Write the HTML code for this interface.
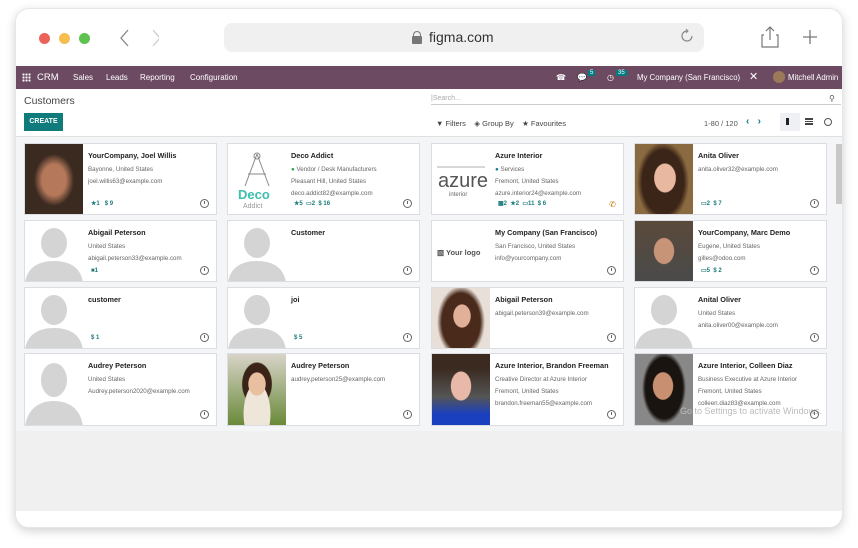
<!DOCTYPE html>
<html><head><meta charset="utf-8"><style>
*{box-sizing:border-box;margin:0;padding:0}
body{width:858px;height:548px;background:#fff;font-family:"Liberation Sans",sans-serif;position:relative;overflow:hidden}
.frame{position:absolute;left:15px;top:8px;width:828px;height:520px;border-radius:14px;background:#fff;box-shadow:0 3px 10px rgba(0,0,0,.18);overflow:hidden;border:1px solid #e6e6e6}
.a{position:absolute}
.nav{left:0;top:57px;width:828px;height:23px;background:#6c4a62;color:#fff;font-size:8px}
.nav span{position:absolute;top:7px;white-space:nowrap}
.card{position:absolute;width:193px;background:#fff;border:1px solid #dcdde2;font-size:6.2px;color:#666;overflow:hidden}
.card .im{position:absolute;left:0;top:0;bottom:0;width:58px}
.card .t{position:absolute;left:63px;top:7px;right:4px}
.card b{display:block;font-size:7.3px;color:#222;font-weight:bold;margin-bottom:6px}
.card p{margin-bottom:5px;white-space:nowrap}
.card .ft{position:absolute;left:66px;bottom:7px;font-size:6px;color:#1a7a7a;font-weight:bold}
.clk{position:absolute;right:7px;bottom:6px;width:9px;height:9px;border:1.2px solid #666;border-radius:50%}
.clk:after{content:"";position:absolute;left:3px;top:1px;width:1px;height:3px;background:#666}
.ph{background:#fff}
</style></head><body>
<div class="frame">
 <div class="a" style="left:23px;top:24px;width:11px;height:11px;border-radius:50%;background:#ec6158"></div>
 <div class="a" style="left:43px;top:24px;width:11px;height:11px;border-radius:50%;background:#f5be4f"></div>
 <div class="a" style="left:63px;top:24px;width:11px;height:11px;border-radius:50%;background:#5dc24f"></div>
 <svg class="a" style="left:103px;top:20px" width="40" height="18"><path d="M9 1L2 9l7 8" stroke="#888" fill="none" stroke-width="1.3"/><path d="M34 1l7 8-7 8" stroke="#ccc" fill="none" stroke-width="1.3"/></svg>
 <div class="a" style="left:208px;top:14px;width:480px;height:29px;border-radius:8px;background:#f0f0f0"></div>
 <div class="a" style="left:397px;top:22px;width:8px;height:7px;border:1.5px solid #777;border-bottom:none;border-radius:4px 4px 0 0"></div>
 <div class="a" style="left:396px;top:27px;width:10px;height:8px;background:#777;border-radius:1px"></div>
 <div class="a" style="left:413px;top:20px;font-size:14px;color:#333">figma.com</div>
 <svg class="a" style="left:664px;top:20px" width="14" height="14"><path d="M7 2a5 5 0 1 0 5 5" stroke="#888" fill="none" stroke-width="1.2"/><path d="M6 0l2 2-2 2" stroke="#888" fill="none"/></svg>
 <svg class="a" style="left:745px;top:17px" width="18" height="22"><path d="M3 9H1v12h16V9h-2M9 1v13M5 5l4-4 4 4" stroke="#777" fill="none" stroke-width="1.2"/></svg>
 <svg class="a" style="left:786px;top:20px" width="16" height="16"><path d="M8 1v14M1 8h14" stroke="#777" stroke-width="1.3"/></svg>

 <div class="a nav">
  <div class="a" style="left:6px;top:7px;width:9px;height:9px;background:radial-gradient(circle,#fff 1px,transparent 1.2px) 0 0/3px 3px"></div>
  <span style="left:21px;font-size:9.5px;top:6px">CRM</span>
  <span style="left:57px">Sales</span><span style="left:90px">Leads</span><span style="left:124px">Reporting</span><span style="left:174px">Configuration</span>
  <span style="left:540px">☎</span>
  <span style="left:561px">💬</span><span style="left:572px;top:4px;background:#017e84;padding:0 2px;font-size:6px">5</span>
  <span style="left:591px">◷</span><span style="left:600px;top:4px;background:#017e84;padding:0 2px;font-size:6px">35</span>
  <span style="left:621px;font-size:7.8px">My Company (San Francisco)</span>
  <span style="left:733px;font-size:11px;top:4px">✕</span>
  <div class="a" style="left:757px;top:5px;width:12px;height:12px;border-radius:50%;background:#9b7a5a"></div>
  <span style="left:772px;font-size:7.8px">Mitchell Admin</span>
 </div>
 <div class="a" style="left:8px;top:86px;font-size:10.5px;color:#444">Customers</div>
 <div class="a" style="left:8px;top:104px;width:39px;height:18px;background:#0f7b7b;color:#fff;font-size:7px;font-weight:bold;text-align:center;line-height:18px">CREATE</div>
 <div class="a" style="left:415px;top:81px;width:410px;height:15px;border-bottom:1px solid #ccc;font-size:7px;color:#aaa;padding-top:5px">|Search...</div>
 <div class="a" style="left:813px;top:85px;font-size:8px;color:#555">⚲</div>
 <div class="a" style="left:420px;top:110px;font-size:7.5px;color:#444;white-space:nowrap">▼ Filters &nbsp;&nbsp; ◈ Group By &nbsp;&nbsp; ★ Favourites</div>
 <div class="a" style="left:688px;top:110px;font-size:7.5px;color:#555">1-80 / 120</div>
 <div class="a" style="left:730px;top:107px;font-size:10px;color:#0f7b7b;font-weight:bold">‹ &nbsp; ›</div>
 <div class="a" style="left:764px;top:104px;width:20px;height:18px;background:#eef0f3"></div>
 <div class="a" style="left:770px;top:109px;width:6px;height:7px;background:#222;border-right:3px solid #eef0f3;box-shadow:3px 0 0 #222 inset"></div>
 <div class="a" style="left:789px;top:109px;width:8px;height:7px;border-top:2px solid #444;border-bottom:2px solid #444;background:linear-gradient(#fff 1px,#444 1px,#444 2px,#fff 2px)"></div>
 <div class="a" style="left:808px;top:109px;width:8px;height:8px;border:1px solid #555;border-radius:50%"></div>

 <div class="a" style="left:0;top:127px;width:828px;height:295px;background:#f4f5f7;border-top:1px solid #e0e0e0"></div>
 <div class="a" style="left:0;top:422px;width:828px;height:80px;background:#f0f0f0"></div>
 <div class="a" style="left:820px;top:135px;width:8px;height:60px;background:#c8c8c8"></div>

 <div class="a" style="left:8px;top:134px;width:820px;height:290px">
 <div class="card" style="left:0;top:0;height:72px"><div class="im" style="background:radial-gradient(ellipse 20px 26px at 29px 36px,#b5785a 60%,#3a2a20 100%),#1b6fa8"></div><div class="t"><b>YourCompany, Joel Willis</b><p>Bayonne, United States</p><p>joel.willis63@example.com</p></div><div class="ft">★1 &nbsp; $ 9</div><div class="clk"></div></div>
 <div class="card" style="left:203px;top:0;height:72px"><div class="im ph"><svg width="58" height="72"><path d="M29 10l-12 32M29 10l12 32M20 30h18" stroke="#888" fill="none"/><circle cx="29" cy="12" r="3" fill="none" stroke="#888"/><text x="10" y="55" font-size="13" font-weight="bold" fill="#3cbfae" font-family="Liberation Sans">Deco</text><text x="15" y="64" font-size="7" fill="#999" font-family="Liberation Sans">Addict</text></svg></div><div class="t"><b>Deco Addict</b><p><span style="color:#28a745">●</span> Vendor / Desk Manufacturers</p><p>Pleasant Hill, United States</p><p>deco.addict82@example.com</p></div><div class="ft">★5 &nbsp;▭2 &nbsp;$ 16</div><div class="clk"></div></div>
 <div class="card" style="left:407px;top:0;height:72px"><div class="im ph"><svg width="58" height="72"><line x1="5" y1="23" x2="53" y2="23" stroke="#666" stroke-width=".6"/><text x="6" y="43" font-size="20" fill="#555" font-family="Liberation Sans">azure</text><text x="17" y="52" font-size="6" fill="#666" font-family="Liberation Sans">interior</text></svg></div><div class="t"><b>Azure Interior</b><p><span style="color:#1a7a9a">●</span> Services</p><p>Fremont, United States</p><p>azure.interior24@example.com</p></div><div class="ft">▦2 &nbsp;★2 &nbsp;▭11 &nbsp;$ 6</div><div class="a" style="right:7px;bottom:5px;color:#c77b00;font-size:8px">✆</div></div>
 <div class="card" style="left:610px;top:0;height:72px"><div class="im" style="background:radial-gradient(ellipse 15px 20px at 30px 34px,#e8b8a0 70%,transparent 75%),radial-gradient(ellipse 26px 40px at 28px 38px,#3b2418 80%,#8a6a40 100%)"></div><div class="t"><b>Anita Oliver</b><p>anita.oliver32@example.com</p></div><div class="ft">▭2 &nbsp;$ 7</div><div class="clk"></div></div>
 <div class="card" style="left:0;top:77px;height:62px"><div class="im ph"><svg width="58" height="62"><ellipse cx="29" cy="22" rx="13" ry="15" fill="#d4d4d4"/><path d="M0 62c2-16 14-22 29-22s27 6 29 22z" fill="#d4d4d4"/></svg></div><div class="t"><b>Abigail Peterson</b><p>United States</p><p>abigail.peterson33@example.com</p></div><div class="ft">■1</div><div class="clk"></div></div>
 <div class="card" style="left:203px;top:77px;height:62px"><div class="im ph"><svg width="58" height="62"><ellipse cx="29" cy="22" rx="13" ry="15" fill="#d4d4d4"/><path d="M0 62c2-16 14-22 29-22s27 6 29 22z" fill="#d4d4d4"/></svg></div><div class="t"><b>Customer</b></div><div class="clk"></div></div>
 <div class="card" style="left:407px;top:77px;height:62px"><div class="im ph"><div style="position:absolute;left:5px;top:27px;font-size:7.5px;color:#555;font-weight:bold">▧ Your logo</div></div><div class="t"><b>My Company (San Francisco)</b><p>San Francisco, United States</p><p>info@yourcompany.com</p></div><div class="clk"></div></div>
 <div class="card" style="left:610px;top:77px;height:62px"><div class="im" style="background:radial-gradient(ellipse 14px 18px at 29px 30px,#c89478 70%,transparent 75%),linear-gradient(#5a4a3a,#4a4a4a)"></div><div class="t"><b>YourCompany, Marc Demo</b><p>Eugene, United States</p><p>gilles@odoo.com</p></div><div class="ft">▭5 &nbsp;$ 2</div><div class="clk"></div></div>
 <div class="card" style="left:0;top:144px;height:62px"><div class="im ph"><svg width="58" height="62"><ellipse cx="29" cy="22" rx="13" ry="15" fill="#d4d4d4"/><path d="M0 62c2-16 14-22 29-22s27 6 29 22z" fill="#d4d4d4"/></svg></div><div class="t"><b>customer</b></div><div class="ft">$ 1</div><div class="clk"></div></div>
 <div class="card" style="left:203px;top:144px;height:62px"><div class="im ph"><svg width="58" height="62"><ellipse cx="29" cy="22" rx="13" ry="15" fill="#d4d4d4"/><path d="M0 62c2-16 14-22 29-22s27 6 29 22z" fill="#d4d4d4"/></svg></div><div class="t"><b>joi</b></div><div class="ft">$ 5</div><div class="clk"></div></div>
 <div class="card" style="left:407px;top:144px;height:62px"><div class="im" style="background:radial-gradient(ellipse 12px 16px at 30px 28px,#e0b098 70%,transparent 75%),radial-gradient(ellipse 24px 36px at 29px 34px,#4a2a1a 80%,#e8e0d8 100%)"></div><div class="t"><b>Abigail Peterson</b><p>abigail.peterson39@example.com</p></div><div class="clk"></div></div>
 <div class="card" style="left:610px;top:144px;height:62px"><div class="im ph"><svg width="58" height="62"><ellipse cx="29" cy="22" rx="13" ry="15" fill="#d4d4d4"/><path d="M0 62c2-16 14-22 29-22s27 6 29 22z" fill="#d4d4d4"/></svg></div><div class="t"><b>Anital Oliver</b><p>United States</p><p>anita.oliver00@example.com</p></div><div class="clk"></div></div>
 <div class="card" style="left:0;top:210px;height:73px"><div class="im ph"><svg width="58" height="73"><ellipse cx="29" cy="26" rx="13" ry="17" fill="#d4d4d4"/><path d="M0 73c2-18 14-26 29-26s27 8 29 26z" fill="#d4d4d4"/></svg></div><div class="t"><b>Audrey Peterson</b><p>United States</p><p>Audrey.peterson2020@example.com</p></div><div class="clk"></div></div>
 <div class="card" style="left:203px;top:210px;height:73px"><div class="im" style="background:radial-gradient(ellipse 12px 16px at 29px 30px,#e8c0a0 70%,transparent 75%),radial-gradient(ellipse 22px 50px at 29px 60px,#efe6da 60%,transparent 62%),radial-gradient(ellipse 18px 26px at 29px 30px,#3a2418 80%,transparent 85%),linear-gradient(#d8d4c8,#6a8a3a)"></div><div class="t"><b>Audrey Peterson</b><p>audrey.peterson25@example.com</p></div><div class="clk"></div></div>
 <div class="card" style="left:407px;top:210px;height:73px"><div class="im" style="background:radial-gradient(ellipse 14px 20px at 29px 32px,#e8b8a8 70%,transparent 75%),linear-gradient(#3a2a20 20%,#555 60%,#1a40c0 85%)"></div><div class="t"><b>Azure Interior, Brandon Freeman</b><p>Creative Director at Azure Interior</p><p>Fremont, United States</p><p>brandon.freeman55@example.com</p></div><div class="clk"></div></div>
 <div class="card" style="left:610px;top:210px;height:73px"><div class="im" style="background:radial-gradient(ellipse 14px 19px at 28px 32px,#c89070 70%,transparent 75%),radial-gradient(ellipse 22px 36px at 29px 34px,#1a1410 85%,#888 100%)"></div><div class="t"><b>Azure Interior, Colleen Diaz</b><p>Business Executive at Azure Interior</p><p>Fremont, United States</p><p>colleen.diaz83@example.com</p></div><div class="a" style="left:45px;top:52px;font-size:9px;color:#bbb;white-space:nowrap">Go to Settings to activate Windows.</div><div class="clk"></div></div>
 </div>
</div>
</body></html>
